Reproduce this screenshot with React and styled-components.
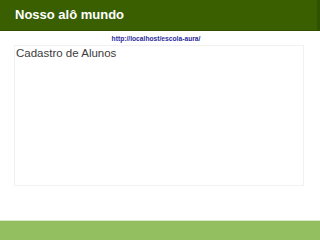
import React from "react";
import styled, { createGlobalStyle } from "styled-components";

const GlobalStyle = createGlobalStyle`
    html, body {
        margin: 0;
        padding: 0;
        background: #ffffff;
    }
    body {
        font-family: "Liberation Sans", Arial, sans-serif;
    }
`;

const Page = styled.div`
    display: flex;
    flex-direction: column;
    height: 240px;
    width: 320px;
    overflow: hidden;
`;

const Header = styled.header`
    align-items: center;
    background-color: #3a5f00;
    border-bottom: 1px solid #2f4f00;
    border-right: 3px solid #2f5200;
    box-sizing: border-box;
    display: flex;
    height: 31px;
    padding-left: 15px;
`;

const HeaderTitle = styled.h1`
    color: #ffffff;
    font-size: 13px;
    font-weight: bold;
    margin: 0;
    padding-bottom: 2px;
`;

const Url = styled.a`
    align-self: center;
    color: #2a2a9c;
    font-size: 6.7px;
    font-weight: bold;
    line-height: 8px;
    margin: 4px 8px 0 0;
    text-decoration: none;
`;

const Content = styled.main`
    display: flex;
    flex: 1;
    flex-direction: column;
    padding: 0 16px 0 14px;
`;

const Panel = styled.section`
    border: 1px solid #f1f1f1;
    box-sizing: border-box;
    height: 141px;
    margin-top: 2px;
    padding: 1px 2px 0 1px;
    width: 290px;
`;

const PanelTitle = styled.h2`
    color: #3c3c3c;
    font-size: 11.5px;
    font-weight: normal;
    line-height: 13px;
    margin: 0;
`;

const Footer = styled.footer`
    background-color: #94bf60;
    border-top: 1px solid #d8e8c8;
    height: 19px;
    margin-top: auto;
`;

export default function App() {
    return (
        <Page>
            <GlobalStyle />
            <Header>
                <HeaderTitle>Nosso alô mundo</HeaderTitle>
            </Header>
            <Url href="#">http://localhost/escola-aura/</Url>
            <Content>
                <Panel>
                    <PanelTitle>Cadastro de Alunos</PanelTitle>
                </Panel>
            </Content>
            <Footer />
        </Page>
    );
}
